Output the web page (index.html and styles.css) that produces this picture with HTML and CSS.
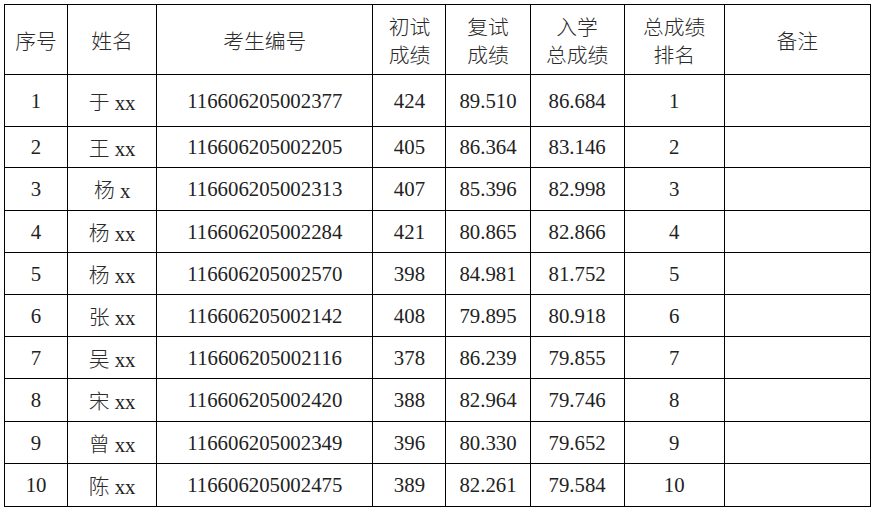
FILE: index.html
```html
<!DOCTYPE html>
<html lang="zh-CN">
<head>
<meta charset="utf-8">
<title>入学总成绩排名</title>
<link rel="stylesheet" href="styles.css">
</head>
<body>
<table class="scores">
  <colgroup>
    <col class="c-no">
    <col class="c-name">
    <col class="c-id">
    <col class="c-first">
    <col class="c-second">
    <col class="c-total">
    <col class="c-rank">
    <col class="c-note">
  </colgroup>
  <thead>
    <tr class="head">
      <th>序号</th>
      <th>姓名</th>
      <th>考生编号</th>
      <th>初试<br>成绩</th>
      <th>复试<br>成绩</th>
      <th>入学<br>总成绩</th>
      <th>总成绩<br>排名</th>
      <th>备注</th>
    </tr>
  </thead>
  <tbody>
    <tr class="first"><td>1</td><td><span class="cn">于</span> xx</td><td>116606205002377</td><td>424</td><td>89.510</td><td>86.684</td><td>1</td><td></td></tr>
    <tr class="r2"><td>2</td><td><span class="cn">王</span> xx</td><td>116606205002205</td><td>405</td><td>86.364</td><td>83.146</td><td>2</td><td></td></tr>
    <tr class="r3"><td>3</td><td><span class="cn">杨</span> x</td><td>116606205002313</td><td>407</td><td>85.396</td><td>82.998</td><td>3</td><td></td></tr>
    <tr><td>4</td><td><span class="cn">杨</span> xx</td><td>116606205002284</td><td>421</td><td>80.865</td><td>82.866</td><td>4</td><td></td></tr>
    <tr><td>5</td><td><span class="cn">杨</span> xx</td><td>116606205002570</td><td>398</td><td>84.981</td><td>81.752</td><td>5</td><td></td></tr>
    <tr><td>6</td><td><span class="cn">张</span> xx</td><td>116606205002142</td><td>408</td><td>79.895</td><td>80.918</td><td>6</td><td></td></tr>
    <tr><td>7</td><td><span class="cn">吴</span> xx</td><td>116606205002116</td><td>378</td><td>86.239</td><td>79.855</td><td>7</td><td></td></tr>
    <tr class="r8"><td>8</td><td><span class="cn">宋</span> xx</td><td>116606205002420</td><td>388</td><td>82.964</td><td>79.746</td><td>8</td><td></td></tr>
    <tr><td>9</td><td><span class="cn">曾</span> xx</td><td>116606205002349</td><td>396</td><td>80.330</td><td>79.652</td><td>9</td><td></td></tr>
    <tr class="r10"><td>10</td><td><span class="cn">陈</span> xx</td><td>116606205002475</td><td>389</td><td>82.261</td><td>79.584</td><td>10</td><td></td></tr>
  </tbody>
</table>
</body>
</html>
```

FILE: styles.css
```css
html, body {
  margin: 0;
  padding: 0;
  background: #ffffff;
}

body {
  padding: 4px 0 0 4px;
}

.scores {
  border-collapse: collapse;
  table-layout: fixed;
  width: 867px;
  font-family: "Liberation Serif", "Noto Sans CJK SC", serif;
  font-size: 20.8px;
  color: #222222;
}

.scores th,
.scores td {
  border: 1.6px solid #000000;
  padding: 0;
  text-align: center;
  vertical-align: middle;
  white-space: nowrap;
}

.scores th {
  font-weight: 300;
  font-family: "Noto Sans CJK SC", sans-serif;
  line-height: 28px;
  color: #2a2a2a;
}

.cn {
  font-family: "Noto Sans CJK SC", sans-serif;
  font-weight: 300;
  color: #2a2a2a;
}

.c-no { width: 63px; }
.c-name { width: 89px; }
.c-id { width: 216px; }
.c-first { width: 73px; }
.c-second { width: 84px; }
.c-total { width: 94px; }
.c-rank { width: 100px; }
.c-note { width: 146px; }

.head { height: 70px; }

tbody tr { height: 42px; }
tbody tr.first { height: 52px; }
tbody tr.r2 { height: 41px; }
tbody tr.r3 { height: 43px; }
tbody tr.r8 { height: 43px; }
tbody tr.r10 { height: 43px; }
```
